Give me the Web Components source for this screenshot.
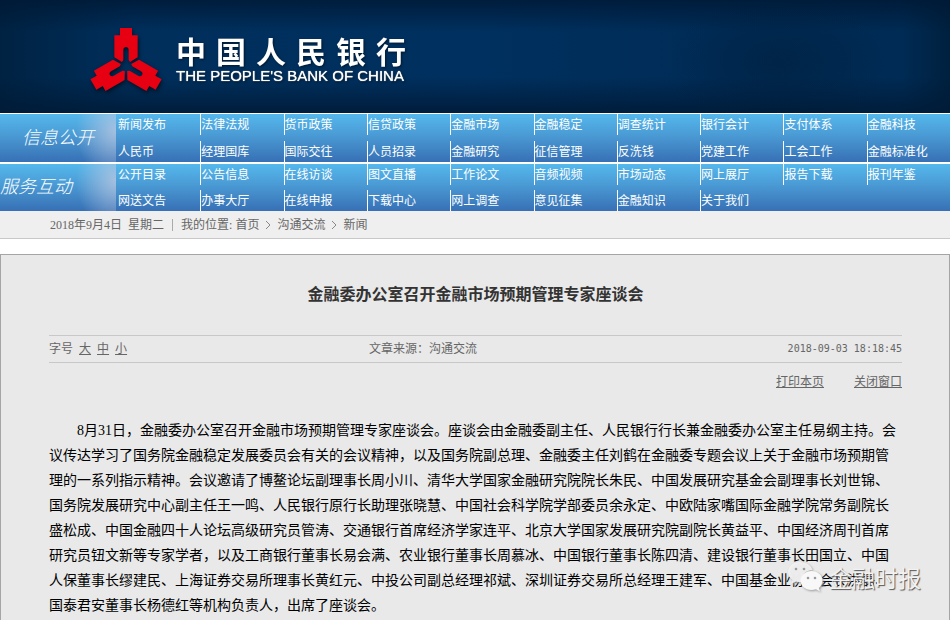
<!DOCTYPE html>
<html lang="zh-CN">
<head>
<meta charset="utf-8">
<title>金融委办公室召开金融市场预期管理专家座谈会</title>
<style>
  html {
    --c-ink: #666;
    --c-line: #c8c8c8;
    --c-panel: #e9e9e9;
    font: 12px/20px "Liberation Serif", "Noto Sans CJK SC", sans-serif;
    color: var(--c-ink);
    text-spacing-trim: space-all;
  }

  body {
    margin: 0;
    background: #fff;
  }
</style>
</head>
<body>
<pbc-page>
  <pbc-header></pbc-header>
  <pbc-menu></pbc-menu>
  <pbc-crumbs></pbc-crumbs>
  <pbc-article source="沟通交流" date="2018-09-03 18:18:45">
    <span slot="title">金融委办公室召开金融市场预期管理专家座谈会</span>
    8月31日，金融委办公室召开金融市场预期管理专家座谈会。座谈会由金融委副主任、人民银行行长兼金融委办公室主任易纲主持。会议传达学习了国务院金融稳定发展委员会有关的会议精神，以及国务院副总理、金融委主任刘鹤在金融委专题会议上关于金融市场预期管理的一系列指示精神。会议邀请了博鳌论坛副理事长周小川、清华大学国家金融研究院院长朱民、中国发展研究基金会副理事长刘世锦、国务院发展研究中心副主任王一鸣、人民银行原行长助理张晓慧、中国社会科学院学部委员余永定、中欧陆家嘴国际金融学院常务副院长盛松成、中国金融四十人论坛高级研究员管涛、交通银行首席经济学家连平、北京大学国家发展研究院副院长黄益平、中国经济周刊首席研究员钮文新等专家学者，以及工商银行董事长易会满、农业银行董事长周慕冰、中国银行董事长陈四清、建设银行董事长田国立、中国人保董事长缪建民、上海证券交易所理事长黄红元、中投公司副总经理祁斌、深圳证券交易所总经理王建军、中国基金业协会会长洪磊、国泰君安董事长杨德红等机构负责人，出席了座谈会。
  </pbc-article>
  <pbc-watermark slot="over">金融时报</pbc-watermark>
</pbc-page>

<script>
(function() {
  const define = (name, render) => {
    window.customElements.define(name, class extends HTMLElement {
      connectedCallback() {
        if (!this.shadowRoot) {
          this.attachShadow({ mode: 'open' }).innerHTML = render(this);
        }
      }
    });
  };

  //=== Page frame
  define('pbc-page', () => `
<style>
:host {
  display: flex;
  flex-direction: column;
  min-height: 100vh;
  padding-right: 1px;
  position: relative;
}
::slotted(pbc-article) {
  flex: 1;
}
::slotted(pbc-watermark) {
  bottom: 27px;
  position: absolute;
  right: 30px;
}
</style>
<slot></slot>
<slot name="over"></slot>
`);

  //=== Banner
  define('pbc-header', () => `
<style>
:host {
  align-items: center;
  background:
    radial-gradient(ellipse 110px 70px at 82% 55%, rgba(0, 28, 56, .5), transparent),
    linear-gradient(to bottom, rgba(0, 24, 52, .8), transparent 28%, transparent 68%, rgba(0, 26, 54, .85)),
    linear-gradient(to right, #002242, #002f5c 14%, #00305f 50%, #002c57 75%, #002b54 95%, #00203e);
  box-sizing: border-box;
  display: flex;
  gap: 14px;
  min-height: 113px;
  padding: 4px 90px 0;
}
.logo {
  fill: #e60012;
  filter: drop-shadow(1px 2px 2px rgba(0, 0, 0, .6));
  flex: none;
  height: 64px;
  width: 72px;
}
.names {
  color: #fff;
  display: grid;
  filter: drop-shadow(1px 1px 1px rgba(0, 0, 0, .5));
  padding-top: 2px;
}
.cn {
  display: flex;
  font: bold 30px/32px "Noto Sans CJK SC", sans-serif;
  gap: 10px;
}
.en {
  font: 15px/20px "Liberation Sans", sans-serif;
  text-shadow: 0 0 1px #fff;
  white-space: nowrap;
}
</style>
<svg class="logo" viewBox="57 51 216 192" aria-hidden="true">
  <defs>
    <path id="arm" d="M147 54h36v22h17v66l-23 14-4-6v-30q0-8-8-9-8 1-8 9v30l-4 6-23-14V76h17z"/>
  </defs>
  <use href="#arm"/>
  <use href="#arm" transform="rotate(120 165 167)"/>
  <use href="#arm" transform="rotate(240 165 167)"/>
</svg>
<div class="names">
  <div class="cn">${[...'中国人民银行'].map(c => `<span>${c}</span>`).join('')}</div>
  <div class="en">THE PEOPLE'S BANK OF CHINA</div>
</div>
`);

  //=== Menu
  const menu = [
    {
      label: '信息公开',
      cls: 'info',
      rows: [
        ['新闻发布', '法律法规', '货币政策', '信贷政策', '金融市场', '金融稳定', '调查统计', '银行会计', '支付体系', '金融科技'],
        ['人民币', '经理国库', '国际交往', '人员招录', '金融研究', '征信管理', '反洗钱', '党建工作', '工会工作', '金融标准化']
      ]
    },
    {
      label: '服务互动',
      cls: 'service',
      rows: [
        ['公开目录', '公告信息', '在线访谈', '图文直播', '工作论文', '音频视频', '市场动态', '网上展厅', '报告下载', '报刊年鉴'],
        ['网送文告', '办事大厅', '在线申报', '下载中心', '网上调查', '意见征集', '金融知识', '关于我们']
      ]
    }
  ];

  const menuRow = items => `<div class="row">${items.map(t => `<a href="#">${t}</a>`).join('')}</div>`;

  define('pbc-menu', () => `
<style>
:host {
  background: #fff;
  border-top: 1px solid #fff;
  display: grid;
  gap: 2px;
}
nav {
  background: linear-gradient(#54b8ec, #4a9ad4 45%, #3770b5);
  display: grid;
  grid-template-columns: 117px 1fr;
}
h2 {
  align-items: center;
  background: radial-gradient(ellipse 40px 50px at 100% 35%, rgba(195, 202, 225, .75), transparent);
  color: #fff;
  display: flex;
  font: italic 300 18px/20px "Noto Sans CJK SC", sans-serif;
  margin: 0 1px 0 0;
  padding-bottom: 5px;
  white-space: nowrap;
}
.info h2 {
  padding-left: 22px;
}
.rows {
  display: grid;
  gap: 6px;
}
.service .rows {
  gap: 5px;
}
.row {
  display: grid;
  grid-template-columns: repeat(10, 1fr);
}
a {
  border-left: 1px solid #fff;
  color: #fff;
  height: 21px;
  line-height: 23px;
  text-decoration: none;
  white-space: nowrap;
}
.service a {
  line-height: 22px;
}
a:first-child {
  border-color: transparent;
}
</style>
${menu.map(({ label, cls, rows }) => `
<nav class="${cls}" aria-label="${label}">
  <h2>${label}</h2>
  <div class="rows">${rows.map(menuRow).join('')}</div>
</nav>`).join('')}
`);

  //=== Date and position
  const arrow = '<svg viewBox="0 0 6 10" aria-hidden="true"><path d="M1 1l4 4-4 4"/></svg>';

  define('pbc-crumbs', () => `
<style>
:host {
  align-items: center;
  background: #efefef;
  border-bottom: 1px solid var(--c-line);
  display: flex;
  gap: 6px;
  margin-bottom: 15px;
  min-height: 27px;
  padding-left: 50px;
}
a {
  color: inherit;
  text-decoration: none;
}
span a {
  padding-left: 3px;
}
i {
  background: #aaa;
  height: 12px;
  margin: 0 2px;
  width: 1px;
}
svg {
  fill: none;
  height: 10px;
  stroke: #888;
  width: 6px;
}
</style>
<span>2018年9月4日</span>
<span>星期二</span>
<i></i>
<span>我的位置:<a href="#">首页</a></span>
${arrow}
<a href="#">沟通交流</a>
${arrow}
<a href="#">新闻</a>
`);

  //=== Article
  define('pbc-article', el => `
<style>
:host {
  background: var(--c-panel);
  border: 1px solid #a5a5a8;
  border-bottom: 0;
  display: block;
  padding: 26px 47px 0 48px;
}
h1 {
  color: #333;
  font: bold 16px/24px "Noto Sans CJK SC", sans-serif;
  margin: 0 0 30px;
  text-align: center;
}
.meta {
  border: solid var(--c-line);
  border-width: 1px 0;
  display: grid;
  grid-template-columns: 3fr 2fr 3fr;
  line-height: 26px;
}
.sizes,
.tools {
  display: flex;
  gap: 6px;
}
.tools {
  gap: 30px;
  justify-content: flex-end;
  margin: 9px 0 26px;
}
a {
  color: inherit;
}
time {
  font: 10px/26px "DejaVu Sans Mono", monospace;
  text-align: right;
}
p {
  color: #000;
  font-size: 14px;
  line-height: 25px;
  margin: 0;
  text-indent: 2em;
}
</style>
<h1><slot name="title"></slot></h1>
<div class="meta">
  <div class="sizes">字号 <a href="#">大</a><a href="#">中</a><a href="#">小</a></div>
  <div>文章来源：${el.getAttribute('source')}</div>
  <time>${el.getAttribute('date')}</time>
</div>
<div class="tools"><a href="#">打印本页</a><a href="#">关闭窗口</a></div>
<p><slot></slot></p>
`);

  //=== Watermark
  define('pbc-watermark', () => `
<style>
:host {
  align-items: center;
  color: #f2f2f2;
  display: flex;
  font: 23px/30px "Noto Sans CJK SC", sans-serif;
  gap: 6px;
  text-shadow: 1px 1px 1px #555;
}
svg {
  filter: drop-shadow(1px 1px 1px #999);
  height: 32px;
  width: 36px;
}
</style>
<svg viewBox="0 0 36 32" aria-hidden="true">
  <path fill="#f4f4f4" fill-opacity=".9" d="M13 1C6 1 1 5.500 1 11c0 3 2 6 4.500 8L4 23l5-2.500c2 .6 4 .7 6 .4-2-7 4-12 10.500-12C24 4 19 1 13 1z"/>
  <path fill="#f8f8f8" d="M24.500 10C18 10 13.500 14.500 13.500 19.500S18 29 24.500 29c1.500 0 3-.3 4.500-.8l4 2.300-1.200-3.500c2.200-2 3.700-4.500 3.700-7.500C35.500 14.500 31 10 24.500 10z"/>
  <g fill="#999">
    <circle cx="9" cy="8" r="1.300"/><circle cx="17" cy="8" r="1.300"/>
    <circle cx="21" cy="17" r="1.300"/><circle cx="28" cy="17" r="1.300"/>
  </g>
</svg>
<span><slot></slot></span>
`);
})();
</script>
</body>
</html>
